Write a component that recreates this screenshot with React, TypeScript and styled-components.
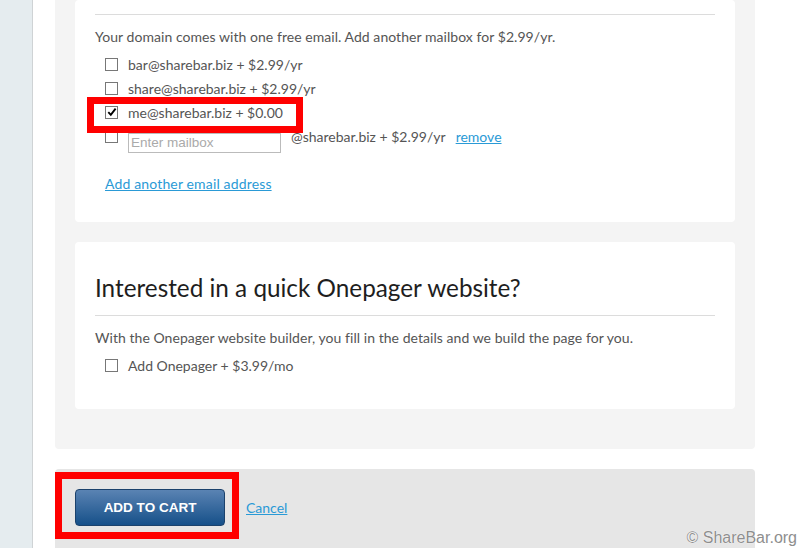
import React from 'react';
import styled, { createGlobalStyle } from 'styled-components';

const GlobalStyle = createGlobalStyle`
  html, body {
    margin: 0;
    padding: 0;
    background: #fff;
    overflow: hidden;
  }
  body {
    font-family: "Lato", "Open Sans", Arial, sans-serif;
    color: #555;
  }
`;

const Page = styled.div`
  display: flex;
  flex-direction: row;
  width: 805px;
  height: 548px;
  position: relative;
  overflow: hidden;
`;

const Sidebar = styled.div`
  width: 32px;
  flex-shrink: 0;
  background: #e5ecef;
  border-right: 1px solid #cfd3d5;
`;

const Main = styled.div`
  display: flex;
  flex-direction: column;
  padding-left: 22px;
  gap: 20px;
`;

const Panel = styled.div`
  width: 660px;
  background: #f4f4f4;
  padding: 0 20px 40px;
  border-radius: 0 0 4px 4px;
  display: flex;
  flex-direction: column;
  gap: 20px;
`;

const Card = styled.div<{ $height: number }>`
  background: #fff;
  border-radius: 4px;
  padding: 0 20px;
  height: ${(p) => p.$height}px;
  display: flex;
  flex-direction: column;
`;

const Divider = styled.div<{ $top: number }>`
  height: 1px;
  background: #dcdcdc;
  margin-top: ${(p) => p.$top}px;
`;

const Heading = styled.h2`
  margin: 32px 0 0;
  font-size: 24.3px;
  font-weight: 400;
  color: #1e1e1e;
  line-height: 28px;
`;

const Text = styled.p`
  margin: 13px 0 0;
  font-size: 14px;
  line-height: 18px;
  letter-spacing: 0.05px;
  color: #555;
`;

const Options = styled.div<{ $top: number }>`
  display: flex;
  flex-direction: column;
  margin-top: ${(p) => p.$top}px;
  padding-left: 10px;
`;

const Row = styled.label`
  display: flex;
  align-items: center;
  height: 24px;
  font-size: 14px;
  color: #555;
  gap: 10px;
`;

const Box = styled.span<{ $checked?: boolean }>`
  width: 11px;
  height: 11px;
  border: 1px solid #777;
  background: #fff;
  display: flex;
  align-items: center;
  justify-content: center;
  flex-shrink: 0;
  margin-top: ${(p) => (p.$checked ? 0 : 1)}px;
`;

const MailInput = styled.input`
  width: 153px;
  height: 20px;
  box-sizing: border-box;
  border: 1px solid #bbb;
  padding: 0 2px;
  font-family: Arial, "Liberation Sans", sans-serif;
  font-size: 13.5px;
  margin-top: 13px;
  &::placeholder {
    color: #aaa;
  }
`;

const Link = styled.a`
  color: #2a9ad6;
  text-decoration: underline;
  font-size: 14px;
  cursor: pointer;
`;

const AddLink = styled(Link)`
  margin-top: 27px;
  margin-left: 10px;
  letter-spacing: 0.15px;
`;

const Footer = styled.div`
  width: 660px;
  height: 100px;
  background: #e6e6e6;
  border-radius: 4px 4px 0 0;
  padding: 20px;
  display: flex;
  align-items: flex-start;
  gap: 21px;
`;

const CartButton = styled.button`
  width: 150px;
  height: 37px;
  border: 1px solid #1c426c;
  border-radius: 4px;
  background: linear-gradient(#5a83b3, #165089);
  color: #fff;
  font-family: Arial, "Liberation Sans", sans-serif;
  font-weight: 700;
  font-size: 13.5px;
  cursor: pointer;
`;

const CancelLink = styled(Link)`
  margin-top: 10px;
`;

const Highlight = styled.div<{ $x: number; $y: number; $w: number; $h: number }>`
  position: absolute;
  left: ${(p) => p.$x}px;
  top: ${(p) => p.$y}px;
  width: ${(p) => p.$w}px;
  height: ${(p) => p.$h}px;
  border: 7px solid #ff0000;
  box-sizing: border-box;
  pointer-events: none;
`;

const Watermark = styled.div`
  position: absolute;
  right: 8px;
  bottom: 1px;
  font-family: Arial, "Liberation Sans", sans-serif;
  font-size: 16px;
  color: #8e8e8e;
  text-shadow: 0 0 1px #fff, 0 0 1px #fff;
`;

const Check = () => (
  <svg width="10" height="10" viewBox="0 0 10 10">
    <path d="M1.3 5.2 L3.8 7.8 L8.6 1.6" fill="none" stroke="#000" strokeWidth="1.9" />
  </svg>
);

type OptionProps = {
  label: string
  checked?: boolean
};

const Option = ({ label, checked }: OptionProps) => (
  <Row>
    <Box $checked={checked}>{checked && <Check />}</Box>
    {label}
  </Row>
);

const App = () => (
  <>
    <GlobalStyle />
    <Page>
      <Sidebar />
      <Main>
        <Panel>
          <Card $height={222}>
            <Divider $top={14} />
            <Text>Your domain comes with one free email. Add another mailbox for $2.99/yr.</Text>
            <Options $top={6}>
              <Option label="bar@sharebar.biz + $2.99/yr" />
              <Option label="share@sharebar.biz + $2.99/yr" />
              <Option label="me@sharebar.biz + $0.00" checked />
              <Row>
                <Box />
                <MailInput placeholder="Enter mailbox" />
                <span>@sharebar.biz + $2.99/yr</span>
                <Link>remove</Link>
              </Row>
            </Options>
            <AddLink>Add another email address</AddLink>
          </Card>
          <Card $height={167}>
            <Heading>Interested in a quick Onepager website?</Heading>
            <Divider $top={13} />
            <Text>With the Onepager website builder, you fill in the details and we build the page for you.</Text>
            <Options $top={6}>
              <Option label="Add Onepager + $3.99/mo" />
            </Options>
          </Card>
        </Panel>
        <Footer>
          <CartButton>ADD TO CART</CartButton>
          <CancelLink>Cancel</CancelLink>
        </Footer>
      </Main>
      <Highlight $x={87} $y={97} $w={216} $h={36} />
      <Highlight $x={55} $y={472} $w={184} $h={67} />
      <Watermark>© ShareBar.org</Watermark>
    </Page>
  </>
);

export default App;
